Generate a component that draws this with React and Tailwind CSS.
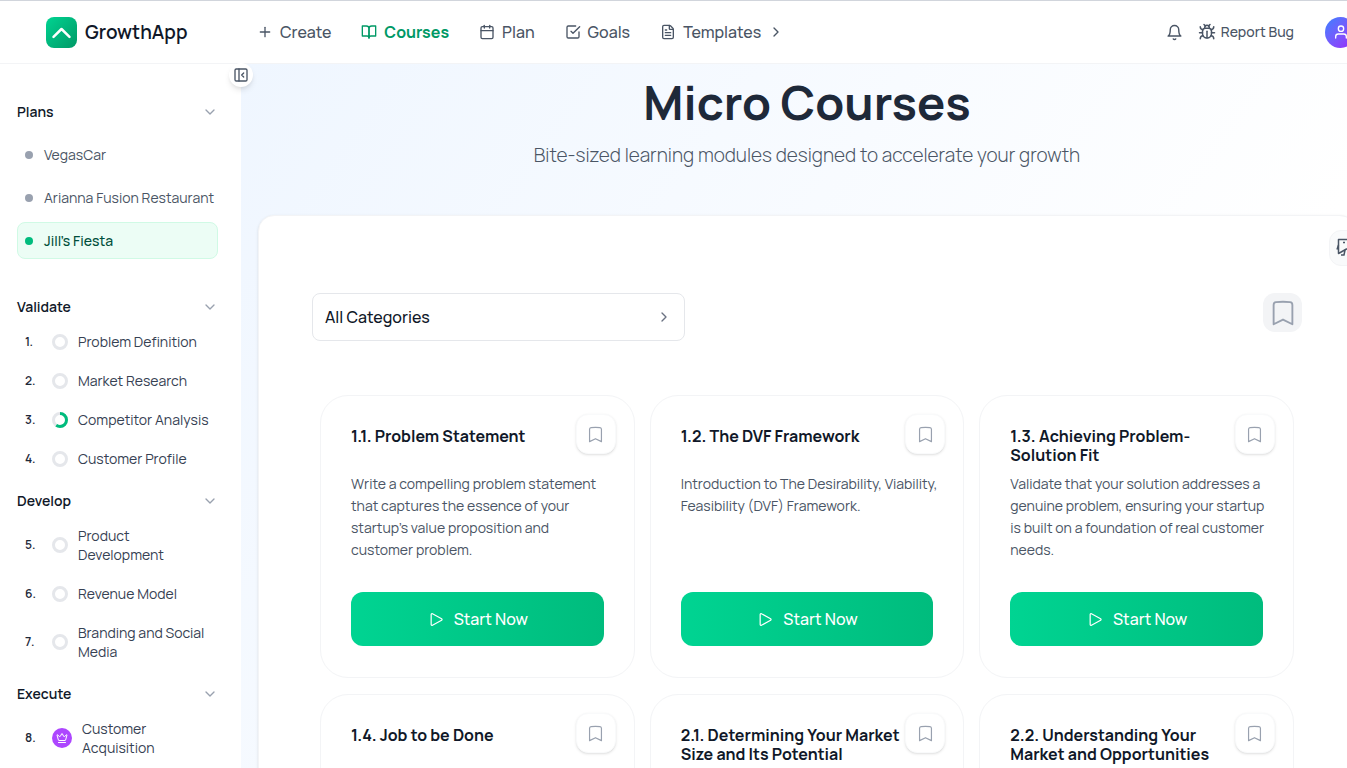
import React, { useState } from 'react';
import {
  FiBell,
  FiBookOpen,
  FiCalendar,
  FiCheckSquare,
  FiChevronDown,
  FiChevronRight,
  FiPlus,
  FiUser,
} from 'react-icons/fi';
import { HiOutlineBookmark, HiOutlinePlay } from 'react-icons/hi2';
import { Bug, Crown, FileText, PanelLeftClose } from 'lucide-react';

const navItems = [
  { label: 'Create', icon: FiPlus },
  { label: 'Courses', icon: FiBookOpen, active: true },
  { label: 'Plan', icon: FiCalendar },
  { label: 'Goals', icon: FiCheckSquare },
  { label: 'Templates', icon: FileText, more: true },
];

const plans = ['VegasCar', 'Arianna Fusion Restaurant', "Jill's Fiesta"];

const sections = [
  {
    title: 'Validate',
    steps: [
      { id: 1, label: 'Problem Definition' },
      { id: 2, label: 'Market Research' },
      { id: 3, label: 'Competitor Analysis', progress: 60 },
      { id: 4, label: 'Customer Profile' },
    ],
  },
  {
    title: 'Develop',
    steps: [
      { id: 5, label: 'Product Development' },
      { id: 6, label: 'Revenue Model' },
      { id: 7, label: 'Branding and Social Media' },
    ],
  },
  {
    title: 'Execute',
    steps: [{ id: 8, label: 'Customer Acquisition', premium: true }],
  },
];

const courses = [
  {
    title: '1.1. Problem Statement',
    text: "Write a compelling problem statement that captures the essence of your startup's value proposition and customer problem.",
  },
  {
    title: '1.2. The DVF Framework',
    text: 'Introduction to The Desirability, Viability, Feasibility (DVF) Framework.',
  },
  {
    title: '1.3. Achieving Problem-Solution Fit',
    text: 'Validate that your solution addresses a genuine problem, ensuring your startup is built on a foundation of real customer needs.',
  },
  { title: '1.4. Job to be Done' },
  { title: '2.1. Determining Your Market Size and Its Potential' },
  { title: '2.2. Understanding Your Market and Opportunities' },
];

function Header() {
  return (
    <header className="flex h-16 shrink-0 items-center border-t border-b border-t-gray-300 border-b-gray-100 bg-white pl-[46px]">
      <a href="#home" className="flex w-[211px] shrink-0 items-center gap-2">
        <span className="flex size-[31px] items-center justify-center rounded-lg bg-gradient-to-br from-[#00d492] to-[#009966] text-white">
          <svg viewBox="0 0 31 31" className="size-full" fill="none" stroke="currentColor" strokeWidth="2.5" strokeLinecap="round" strokeLinejoin="round">
            <path d="M7.5 19.8 15.5 12l8 7.8" />
          </svg>
        </span>
        <span className="text-[19px] font-semibold text-gray-900">GrowthApp</span>
      </a>
      <nav className="flex items-center gap-[30px]">
        {navItems.map(({ label, icon: Icon, active, more }) => (
          <a
            key={label}
            href={`#${label.toLowerCase()}`}
            className={`flex items-center gap-[7px] text-base ${
              active ? 'font-bold text-[#009966]' : 'font-medium text-gray-600'
            }`}
          >
            <Icon size={16} strokeWidth={2} />
            {label}
            {more && <FiChevronRight size={16} />}
          </a>
        ))}
      </nav>
      <div className="ml-auto flex items-center">
        <button type="button" aria-label="Notifications" className="mr-[15px] text-gray-600">
          <FiBell size={17} />
        </button>
        <button type="button" className="flex items-center gap-[5px] text-sm font-medium text-gray-600">
          <Bug size={18} />
          Report Bug
        </button>
        <button
          type="button"
          aria-label="Account"
          className="-mr-[9px] ml-[31px] flex size-[31px] items-center justify-center rounded-full bg-gradient-to-br from-[#2b7fff] to-[#9810fa] text-white"
        >
          <FiUser size={16} />
        </button>
      </div>
    </header>
  );
}

function SectionTitle({ children }) {
  return (
    <button type="button" className="flex w-full items-center justify-between text-sm font-semibold text-gray-900">
      {children}
      <FiChevronDown size={16} className="text-gray-400" />
    </button>
  );
}

function ProgressRing({ value = 0 }) {
  return (
    <svg viewBox="0 0 16 16" className="size-4 shrink-0 -rotate-90" fill="none" strokeWidth="3">
      <circle cx="8" cy="8" r="6.5" stroke="#e5e7eb" />
      {value > 0 && (
        <circle cx="8" cy="8" r="6.5" stroke="#00bc7d" pathLength="100" strokeDasharray={`${value} 100`} />
      )}
    </svg>
  );
}

function FeedbackIcon() {
  return (
    <svg viewBox="0 0 20 20" className="size-5 shrink-0" fill="none" stroke="currentColor" strokeWidth="1.5" strokeLinejoin="round">
      <path d="M2.5 1.5H18v9.5h-7.5l-8 4.5z" />
      <path d="M2.5 7 1 11.5M9 12l-1 5H5M7 4.5h2M12 5h2" />
    </svg>
  );
}

function Sidebar() {
  const [selected, setSelected] = useState("Jill's Fiesta");

  return (
    <aside className="relative w-[241px] shrink-0 bg-white pt-[38px] pr-[23px] pl-[17px]">
      <button
        type="button"
        aria-label="Collapse sidebar"
        className="absolute -top-px -right-3 z-10 flex size-6 items-center justify-center rounded-full bg-white text-gray-600 shadow-md"
      >
        <PanelLeftClose size={16} />
      </button>

      <SectionTitle>Plans</SectionTitle>
      <ul className="mt-[14px] mb-[38px] space-y-[6px]">
        {plans.map((plan) => (
          <li key={plan}>
            <button
              type="button"
              onClick={() => setSelected(plan)}
              className={`flex h-[37px] w-full items-center gap-[11px] rounded-lg border pl-[7px] text-sm whitespace-nowrap ${
                plan === selected
                  ? 'border-[#d0fae5] bg-[#ecfdf5] font-medium text-[#004f3b]'
                  : 'border-transparent text-gray-600'
              }`}
            >
              <span className={`size-2 shrink-0 rounded-full ${plan === selected ? 'bg-[#00bc7d]' : 'bg-gray-400'}`} />
              {plan}
            </button>
          </li>
        ))}
      </ul>

      {sections.map((section) => (
        <section key={section.title} className="mb-[13px]">
          <SectionTitle>{section.title}</SectionTitle>
          <ul className="mt-[5px]">
            {section.steps.map((step) => (
              <li key={step.id}>
                <a href={`#step-${step.id}`} className="flex items-center py-[10px] pl-2 text-sm leading-[19px] text-gray-700">
                  <span className="w-[27px] shrink-0 text-xs font-semibold text-gray-800">{step.id}.</span>
                  {step.premium ? (
                    <span className="flex size-5 shrink-0 items-center justify-center rounded-full bg-[#ad46ff] text-white">
                      <Crown size={12} />
                    </span>
                  ) : (
                    <ProgressRing value={step.progress} />
                  )}
                  <span className="ml-[10px]">{step.label}</span>
                </a>
              </li>
            ))}
          </ul>
        </section>
      ))}
    </aside>
  );
}

function CourseCard({ course }) {
  return (
    <article className="relative flex h-[283px] flex-col rounded-[28px] border border-gray-100 bg-white px-[30px] pt-[31px] pb-[31px]">
      <h2 className="h-[39px] pr-8 text-base leading-[19px] font-bold text-gray-900">{course.title}</h2>
      {course.text && <p className="mt-[7px] -mr-2 text-sm leading-[22px] text-gray-600">{course.text}</p>}
      <button
        type="button"
        aria-label={`Bookmark ${course.title}`}
        className="absolute top-[18px] right-[18px] flex size-10 items-center justify-center rounded-xl border border-gray-50 bg-white text-gray-400 shadow-sm"
      >
        <HiOutlineBookmark size={19} />
      </button>
      <button
        type="button"
        className="mt-auto flex h-[54px] shrink-0 items-center justify-center gap-2 rounded-xl bg-gradient-to-r from-[#00d492] to-[#00bc7d] text-base font-medium text-white"
      >
        <HiOutlinePlay size={19} />
        Start Now
      </button>
    </article>
  );
}

export default function App() {
  return (
    <div className="flex h-screen flex-col overflow-hidden bg-white font-['Manrope','Inter',sans-serif]">
      <Header />
      <div className="flex min-h-0 flex-1">
        <Sidebar />
        <main className="min-w-0 flex-1 overflow-hidden bg-[linear-gradient(125deg,#eff6ff,#ffffff_75%)] pt-[14px] pl-[17px]">
          <div className="-mr-[9px]">
            <div className="text-center">
              <h1 className="text-[47px] leading-[48px] font-bold text-gray-800">Micro Courses</h1>
              <p className="mt-[14px] text-[19px] leading-[30px] font-light text-gray-600">
                Bite-sized learning modules designed to accelerate your growth
              </p>
            </div>

            <div className="relative mt-[45px] rounded-2xl border border-gray-100 bg-white px-[53px] pt-[77px] shadow-sm">
              <button
                type="button"
                aria-label="Feedback"
                className="absolute top-[14px] right-0 flex h-9 w-[26px] items-center rounded-l-xl border border-gray-100 bg-gray-50 pl-[6px] text-gray-600"
              >
                <FeedbackIcon />
              </button>
              <div className="flex items-start justify-between">
                <button
                  type="button"
                  className="flex h-12 w-[373px] items-center justify-between rounded-lg border border-gray-200 px-3 text-base font-medium text-gray-900"
                >
                  All Categories
                  <FiChevronRight size={16} className="text-gray-500" />
                </button>
                <button
                  type="button"
                  aria-label="Saved courses"
                  className="flex size-[39px] items-center justify-center rounded-xl bg-gray-100 text-gray-400"
                >
                  <HiOutlineBookmark size={30} />
                </button>
              </div>

              <div className="mt-[54px] grid grid-cols-3 gap-x-[15px] gap-y-4 px-2">
                {courses.map((course) => (
                  <CourseCard key={course.title} course={course} />
                ))}
              </div>
            </div>
          </div>
        </main>
      </div>
    </div>
  );
}
